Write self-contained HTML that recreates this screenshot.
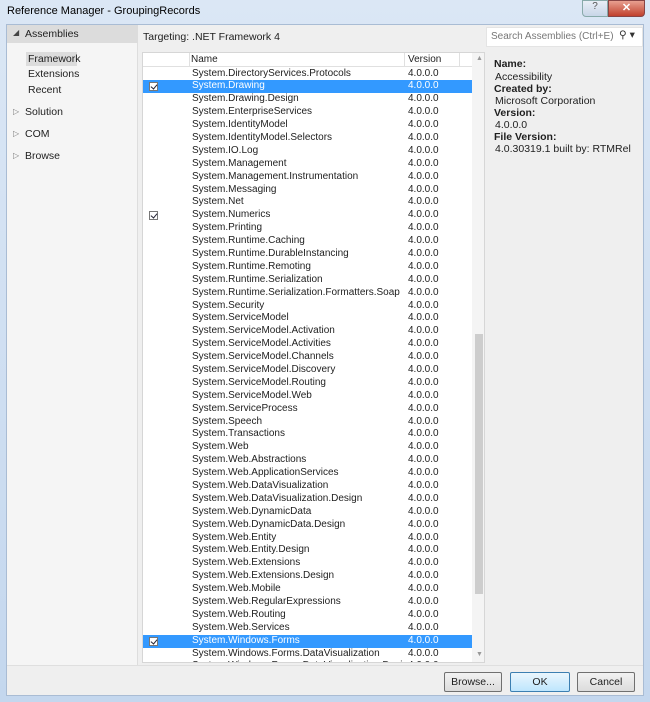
<!DOCTYPE html><html><head><style>
*{margin:0;padding:0;box-sizing:border-box}
body{width:650px;height:702px;overflow:hidden;font-family:"Liberation Sans",sans-serif;font-size:10px;color:#1e1e1e;background:linear-gradient(#dbe7f5,#c4d7ee);position:relative}
.abs{position:absolute}
#title{left:7px;top:5px;font-size:11px;color:#000}
#client{left:6px;top:24px;width:638px;height:672px;background:#efefef;border:1px solid #a9bcd4}
#left{left:0;top:0;width:131px;height:640px;background:#f5f5f5;border-right:1px solid #ddd}
.li{position:absolute;font-size:10.5px}
#list{left:135px;top:27px;width:343px;height:611px;background:#fff;border:1px solid #d6d6d6;overflow:hidden}
.hdr{position:absolute;top:0;left:0;width:330px;height:14px;border-bottom:1px solid #e0e0e0;background:#fff}
.row{position:absolute;left:0;width:329px;height:12.9px;line-height:12.9px}
.row span{position:absolute}
.sel{background:#3399ff;color:#fff}
.cb{position:absolute;left:6px;top:2px;width:9px;height:9px;border:1px solid #777;background:#fff}
.cb:after{content:"";position:absolute;left:2px;top:0;width:3px;height:5px;border:solid #223;border-width:0 1.5px 1.5px 0;transform:rotate(40deg)}
#sb{left:329px;top:0;width:14px;height:611px;background:#f4f4f4}
.btn{position:absolute;top:647px;height:20px;border:1px solid #707070;border-radius:2px;background:linear-gradient(#f2f2f2,#dcdcdc);text-align:center;line-height:18px;font-size:10.5px}
</style></head><body>
<div class="abs" id="title">Reference Manager - GroupingRecords</div>
<div class="abs" style="left:582px;top:0;width:26px;height:17px;border:1px solid #8aa;border-radius:0 0 0 4px;background:linear-gradient(#e8eef6,#c8d6e8);text-align:center;font-size:10px;color:#555">?</div>
<div class="abs" style="left:608px;top:0;width:37px;height:17px;border:1px solid #844;border-radius:0 0 4px 0;background:linear-gradient(#e8a090,#c0402c);text-align:center;color:#fff;font-weight:bold;font-size:11px">✕</div>
<div class="abs" id="client">
<div class="abs" id="left">
<div class="abs" style="left:0;top:0;width:131px;height:18px;background:#dcdcdc"></div>
<div class="li" style="left:6px;top:3px;font-size:8px;color:#444">◢</div>
<div class="li" style="left:18px;top:3px">Assemblies</div>
<div class="abs" style="left:19px;top:27px;width:51px;height:14px;background:#dcdcdc"></div>
<div class="li" style="left:21px;top:28px">Framework</div>
<div class="li" style="left:21px;top:43px">Extensions</div>
<div class="li" style="left:21px;top:59px">Recent</div>
<div class="li" style="left:6px;top:82px;font-size:8px;color:#777">▷</div><div class="li" style="left:18px;top:81px">Solution</div>
<div class="li" style="left:6px;top:104px;font-size:8px;color:#777">▷</div><div class="li" style="left:18px;top:103px">COM</div>
<div class="li" style="left:6px;top:126px;font-size:8px;color:#777">▷</div><div class="li" style="left:18px;top:125px">Browse</div>
</div>
<div class="li" style="left:136px;top:6px">Targeting: .NET Framework 4</div>
<div class="abs" style="left:479px;top:2px;width:157px;height:20px;background:#fff;border:1px solid #e4e4e4"></div>
<div class="li" style="left:484px;top:6px;color:#777;font-size:10px">Search Assemblies (Ctrl+E)</div>
<div class="li" style="left:612px;top:4px;color:#333">⚲ ▾</div>
<div class="abs" id="list">
<div class="hdr"><span class="abs" style="left:48px;top:1px">Name</span><span class="abs" style="left:265px;top:1px">Version</span>
<div class="abs" style="left:46px;top:0;width:1px;height:14px;background:#e0e0e0"></div><div class="abs" style="left:261px;top:0;width:1px;height:14px;background:#e0e0e0"></div><div class="abs" style="left:316px;top:0;width:1px;height:14px;background:#e0e0e0"></div></div>
<div id="rows"></div>
<div class="abs" id="sb"><div class="abs" style="left:4px;top:2px;font-size:7px;color:#999">▲</div><div class="abs" style="left:3px;top:281px;width:8px;height:260px;background:#cdcdcd"></div><div class="abs" style="left:4px;top:598px;font-size:7px;color:#999">▼</div></div>
</div>
<div class="li" style="left:487px;top:33px;font-weight:bold">Name:</div>
<div class="li" style="left:488px;top:46px">Accessibility</div>
<div class="li" style="left:487px;top:58px;font-weight:bold">Created by:</div>
<div class="li" style="left:488px;top:70px">Microsoft Corporation</div>
<div class="li" style="left:487px;top:82px;font-weight:bold">Version:</div>
<div class="li" style="left:488px;top:94px">4.0.0.0</div>
<div class="li" style="left:487px;top:106px;font-weight:bold">File Version:</div>
<div class="li" style="left:488px;top:118px">4.0.30319.1 built by: RTMRel</div>
<div class="abs" style="left:0;top:640px;width:636px;height:1px;background:#dfdfdf"></div>
<div class="btn" style="left:437px;width:58px">Browse...</div>
<div class="btn" style="left:503px;width:60px;border-color:#3c7fb1;background:linear-gradient(#eaf6fd,#bee6fd)">OK</div>
<div class="btn" style="left:570px;width:58px">Cancel</div>
</div>
<script>
var n=["System.DirectoryServices.Protocols","System.Drawing","System.Drawing.Design","System.EnterpriseServices","System.IdentityModel","System.IdentityModel.Selectors","System.IO.Log","System.Management","System.Management.Instrumentation","System.Messaging","System.Net","System.Numerics","System.Printing","System.Runtime.Caching","System.Runtime.DurableInstancing","System.Runtime.Remoting","System.Runtime.Serialization","System.Runtime.Serialization.Formatters.Soap","System.Security","System.ServiceModel","System.ServiceModel.Activation","System.ServiceModel.Activities","System.ServiceModel.Channels","System.ServiceModel.Discovery","System.ServiceModel.Routing","System.ServiceModel.Web","System.ServiceProcess","System.Speech","System.Transactions","System.Web","System.Web.Abstractions","System.Web.ApplicationServices","System.Web.DataVisualization","System.Web.DataVisualization.Design","System.Web.DynamicData","System.Web.DynamicData.Design","System.Web.Entity","System.Web.Entity.Design","System.Web.Extensions","System.Web.Extensions.Design","System.Web.Mobile","System.Web.RegularExpressions","System.Web.Routing","System.Web.Services","System.Windows.Forms","System.Windows.Forms.DataVisualization","System.Windows.Forms.DataVisualization.Design"];
var h="";n.forEach(function(s,i){var sel=(i==1||i==44),ck=sel||i==11;h+='<div class="row'+(sel?' sel':'')+'" style="top:'+(14.5+i*12.89)+'px">'+(ck?'<div class="cb"></div>':'')+'<span style="left:49px">'+s+'</span><span style="left:265px">4.0.0.0</span></div>'});
document.getElementById("rows").innerHTML=h;
</script>
</body></html>
